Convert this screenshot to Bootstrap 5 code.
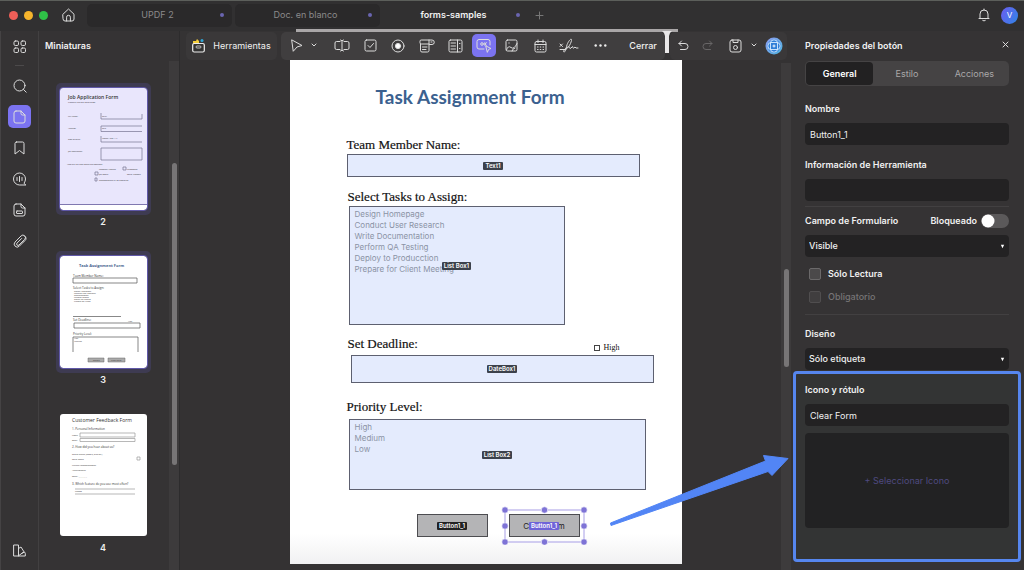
<!DOCTYPE html>
<html lang="es">
<head>
<meta charset="utf-8">
<meta name="viewport" content="width=device-width, initial-scale=1">
<title>UPDF - forms-samples</title>
<link href="https://cdn.jsdelivr.net/npm/bootstrap@5.3.0/dist/css/bootstrap.min.css" rel="stylesheet">
<style>
:root{--ui:#353334;--line:#424041;--field:#232223;--violet:#7b73f0;--blue:#5686ee}
body{font-family:Inter,"Liberation Sans",sans-serif;font-size:9px;line-height:14px;color:#f0f0f0;background:var(--ui)}
svg{display:block;flex:none}
svg.ic{fill:none;stroke:#dcdcdc;stroke-width:1;stroke-linecap:round;stroke-linejoin:round}
button{font-size:9px;line-height:14px;color:inherit;background:none;border:0;padding:0}
.app{min-height:100vh;border-top:1px solid #5c5f5b}
.topbar{height:30px;background:#313031;padding:0 6px 2px 9px}
.light{width:9px;height:9px;border-radius:50%}
.tabs-row{gap:3px;margin-left:12px}
.doc-tab{width:145px;height:23px;border-radius:5px;background:#2a292a;color:#8a898a;padding:0 8px}
.doc-tab.current{background:none;color:#f2f2f2;font-weight:600}
.doc-tab i{width:4px;height:4px;border-radius:50%;background:#6a65b0}
.avatar{width:17px;height:17px;border-radius:50%;background:linear-gradient(120deg,#6d5cf0,#2f86e6);font-size:8px;margin-left:11px}
.rail{width:39px;border-right:1px solid var(--line);border-left:1px solid #454344}
.rail button{width:23px;height:23px;border-radius:5px}
.rail button.on,.tools button.on{background:var(--violet)}
.rail hr{width:9px;margin:7px 0 8px;opacity:1;border-color:#4c4a4b}
.thumbs{width:141px;border-right:1px solid #2d2c2d}
.gutter{width:10px;background:#3d3b3c}
.knob{width:5px;border-radius:3px;background:#777576}
.pane-title{font-size:9px;font-weight:600;height:30px}
.thumb{padding:5px 4px;border-radius:5px}
.thumb.sel{background:#3e3b52}
.thumb svg{border-radius:3px;background:#fff}
.thumb.sel svg{outline:1px solid #6058a8}
.thumb text{font-family:"Open Sans",sans-serif;fill:#333}
.num{font-size:9px;font-weight:600}
.stage{background:#343233;min-width:0}
.bar{height:29px;background:var(--ui);padding:0 4px 0 6px}
.bar::before{content:"";position:absolute;left:50%;top:-2px;width:382px;margin-left:-190px;height:3px;background:#aaa7a8}
.group{height:28px;border-radius:5px;background:#403e3f}
.group.dark{background:#3a3839}
.tools button{width:24px;height:23px;border-radius:5px}
.tools .narrow{width:12px}
.sheet{width:392px;height:504px;background:linear-gradient(#fff 94%,#f1f1f2);color:#111;padding-left:57px}
.sheet h1{font:700 19px/24px Lato,"Open Sans",sans-serif;color:#3b618f;margin:25px 0 0 29px}
.caption{font:13px/18px "Liberation Serif",serif;color:#111;-webkit-text-stroke:.2px #111}
.box{position:relative;border:1px solid #5d6070;background:#e4ebfd}
.box input,.box select{width:100%;height:100%;border:0;background:none;display:block;outline:0;padding:2px 2px 1px;overflow:hidden;font:8px/11px Inter,sans-serif;color:#8b93a5}
.box option{font:8px/11px Inter,sans-serif;height:11px;min-height:0;padding:0 3px;color:#8b93a5}
.tag{position:absolute;inset:0;pointer-events:none}
.tag span{font-size:6px;line-height:8px;font-weight:600;color:#fff;background:#3c414b;border-radius:1px;padding:0 2px}
.pdf-btn{width:71px;height:23px;background:#b4b4b6;border:1px solid #4c4c50;color:#222;position:relative;font-size:8px}
.handles{position:absolute;left:-9px;top:-9px}
.tag .vio{background:#6f63d8}
.tick{appearance:none;width:6px;height:6px;border:1px solid #444}
.high{font:8px/10px "Liberation Serif",serif;margin-right:62px}
.pointer{position:absolute;right:0;top:423px;z-index:3}
.props{width:233px;padding:0 15px 0 14px}
.props label{font-size:9px;font-weight:600;line-height:14px}
.seg{height:25px;border-radius:5px;background:#454344;padding:1px}
.seg button{color:#aaa8a9;border-radius:4px}
.seg button.on{background:#222122;color:#fff;font-weight:600}
.field{height:22px;border:0;border-radius:4px;background-color:var(--field);color:#f0f0f0;font-size:9px;line-height:14px;padding:0 5px;margin-top:7px}
.field:focus{background-color:var(--field);color:#fff}
select.field{--bs-form-select-bg-img:url("data:image/svg+xml,%3csvg xmlns='http://www.w3.org/2000/svg' viewBox='0 0 6 6'%3e%3cpath fill='%23fff' d='M1 1h4L3 5z'/%3e%3c/svg%3e");background-position:right 4px center;background-size:5px 5px;padding-left:4px;font-weight:500}
.props hr{margin:0;opacity:1;border-color:#424041}
.props .form-check-input{width:12px;height:12px;margin:1px 0 0;border-color:#6b696a;background-color:#4b494a;border-radius:2px}
.props .form-check-input.lock{width:28px;height:14px;border:0;border-radius:7px;margin:0;background-position:left center;background-color:#5b595a;background-size:14px 14px;background-image:url("data:image/svg+xml,%3csvg xmlns='http://www.w3.org/2000/svg' viewBox='0 0 14 14'%3e%3ccircle cx='7' cy='7' r='6.5' fill='%23fff'/%3e%3c/svg%3e")}
.mark-area{border:3px solid var(--blue);border-radius:4px;margin:1px -12px 0;padding:9px 9px 31px;background:#333434}
.pick{height:95px;border-radius:4px;background:#222223;color:#4f4a80;margin-top:7px}
</style>
</head>
<body>
<div class="app d-flex flex-column">
<header class="topbar d-flex align-items-center">
  <div class="d-flex" style="gap:6px"><span class="light" style="background:#ee5f58"></span><span class="light" style="background:#f6b42c"></span><span class="light" style="background:#2fc147"></span></div>
  <button style="margin-left:14px" aria-label="Inicio"><svg class="ic" width="13" height="14" viewBox="0 0 13 14"><path d="M1 6.2 6.5 1 12 6.2V11a2 2 0 0 1-2 2H3a2 2 0 0 1-2-2zM4.6 13V9.2a1.9 1.9 0 0 1 3.8 0V13"/></svg></button>
  <nav class="tabs-row d-flex align-items-center">
    <button class="doc-tab d-flex align-items-center"><span class="flex-fill">UPDF 2</span><i></i></button>
    <button class="doc-tab d-flex align-items-center"><span class="flex-fill">Doc. en blanco</span><i></i></button>
    <button class="doc-tab current d-flex align-items-center"><span class="flex-fill">forms-samples</span><i></i></button>
    <button class="ms-1" aria-label="Nueva pestaña"><svg class="ic" width="9" height="9" viewBox="0 0 9 9" style="stroke:#777"><path d="M4.500 1v7M1 4.500h7"/></svg></button>
  </nav>
  <button class="ms-auto" aria-label="Avisos"><svg class="ic" width="12" height="14" viewBox="0 0 12 14"><path d="M1 10.500h10M2 10.500V6a4 4 0 0 1 8 0v4.500M6 2V1M4.700 12.500q1.300 1 2.600 0"/></svg></button>
  <button class="avatar text-white" aria-label="Cuenta">V</button>
</header>

<div class="d-flex flex-fill">
  <nav class="rail d-flex flex-column align-items-center flex-shrink-0">
    <button class="mt-1" aria-label="Panel"><svg class="ic m-auto" width="13" height="13" viewBox="0 0 13 13"><rect x="1" y="1" width="4.500" height="4.500" rx="1.300"/><rect x="8" y="1" width="4.500" height="4.500" rx="1.300"/><rect x="1" y="8" width="4.500" height="4.500" rx="1.300"/><rect x="8" y="8" width="4.500" height="4.500" rx="1.300"/></svg></button>
    <hr>
    <div class="d-flex flex-column gap-2">
      <button aria-label="Buscar"><svg class="ic m-auto" width="14" height="14" viewBox="0 0 14 14"><circle cx="6.500" cy="6.500" r="5.500"/><path d="m10.500 10.500 2.700 2.700"/></svg></button>
      <button class="on" aria-label="Miniaturas"><svg class="ic m-auto" width="13" height="14" viewBox="0 0 13 14"><path d="M3 1h5l4 4v6a2 2 0 0 1-2 2H3a2 2 0 0 1-2-2V3a2 2 0 0 1 2-2zM8 1v2.500A1.500 1.500 0 0 0 9.500 5H12"/></svg></button>
      <button aria-label="Marcadores"><svg class="ic m-auto" width="11" height="14" viewBox="0 0 11 14"><path d="M2.500 1h6A1.500 1.500 0 0 1 10 2.500V13L5.500 9.500 1 13V2.500A1.500 1.500 0 0 1 2.500 1z"/></svg></button>
      <button aria-label="Comentarios"><svg class="ic m-auto" width="15" height="14" viewBox="0 0 15 14"><path d="M13.500 13H7.500a6 6 0 1 1 6-6q0 2-1.300 4zM5 5.500v3M7.500 4.500v5M10 5.500v3"/></svg></button>
      <button aria-label="Campos"><svg class="ic m-auto" width="13" height="14" viewBox="0 0 13 14"><path d="M3 1h5l4 4v6a2 2 0 0 1-2 2H3a2 2 0 0 1-2-2V3a2 2 0 0 1 2-2zM8 1v2.500A1.500 1.500 0 0 0 9.500 5H12"/><rect x="3.500" y="8" width="6" height="2.500" rx=".5"/></svg></button>
      <button aria-label="Adjuntos"><svg class="ic m-auto" width="14" height="14" viewBox="0 0 14 14"><path d="M10.500 8 6.300 12.200a2.900 2.900 0 0 1-4.200-4.200l6-6.100a2.400 2.400 0 0 1 3.600 3.500L6 11a1.300 1.300 0 0 1-2-1.900l4.600-4.600M10.500 8l1.600-1.600a2.600 2.600 0 0 0-.3-4.300"/></svg></button>
    </div>
    <button class="mt-auto mb-2" aria-label="Estilos"><svg class="ic m-auto" width="13" height="13" viewBox="0 0 13 13"><path d="M1 1h4.500v11H1zM5.500 4.500 8 3l3 4.800-5.500 4M8.500 9.500l3-1.500.8 1.500V12H5.500"/></svg></button>
  </nav>

  <aside class="thumbs d-flex flex-column flex-shrink-0">
    <div class="pane-title d-flex align-items-center" style="padding-left:6px">Miniaturas</div>
    <div class="d-flex flex-fill">
      <div class="flex-fill d-flex flex-column align-items-center" style="padding:22px 2px 0 0">
        <div class="thumb sel"><svg width="87" height="122" viewBox="0 0 87 122"><path fill="#e9e6fc" d="M0 0h87v116H0z"/><path stroke="#8078b0" d="M0 116.500h87"/><text x="8" y="11" font-size="5" font-weight="600">Job Application Form</text><g font-size="2"><text x="8" y="15">Please fill out the form below.</text><text x="8" y="29">Full Name:</text><text x="8" y="41">Address:</text><text x="8" y="52">Date of Birth:</text><text x="8" y="64">Job description:</text><text x="7" y="77">How did you hear about this position?</text><text x="42" y="29">Text1</text><text x="42" y="41">Text</text><text x="42" y="51">Month / Day / Yr</text><text x="39" y="82">Company Website</text><text x="67" y="82">Newspaper</text><text x="39" y="87">Job Board</text><text x="67" y="87">Social Network</text><text x="39" y="93">Recommended by an employee</text></g><path fill="none" stroke="#777391" stroke-width=".7" d="M41 25v6h41v-5M82 38H41v5.500h41M41 48v6h41M41 60v12h41V60zM35 84h3v3h-3zM63 79h3v3h-3zM35 90h2v3h-2z"/></svg></div>
        <div class="num">2</div>
        <div class="thumb sel" style="margin-top:22px"><svg width="87" height="112" viewBox="0 0 87 112"><text x="19" y="11" font-size="4" font-weight="700" style="fill:#48658f">Task Assignment Form</text><g font-size="2"><text x="13" y="21" font-size="3">Team Member Name:</text><text x="13" y="33" font-size="3">Select Tasks to Assign:</text><text x="14" y="36">Design Homepage</text><text x="14" y="38">Conduct User Research</text><text x="14" y="40">Documentation</text><text x="14" y="42">Perform Testing</text><text x="14" y="44">Deploy to Product</text><text x="14" y="46">Prepare for Client</text><text x="13" y="65" font-size="3">Set Deadline:</text><text x="68" y="66">High</text><text x="13" y="79" font-size="3">Priority Level:</text><text x="14" y="83">High</text><text x="14" y="86">Medium</text></g><path fill="none" stroke="#555" stroke-width=".7" d="M13 22h64v5H13zM13 60.500h48M14 67h66v5H14zM78 96V81H13v15"/><path fill="#aaa" stroke="#666" stroke-width=".5" d="M28 102h16v4H28zM48 102h17v4H48z"/><g font-size="2"><text x="33" y="105">Submit</text><text x="51" y="105">Clear Form</text></g></svg></div>
        <div class="num">3</div>
        <div class="thumb" style="margin-top:22px"><svg width="87" height="122" viewBox="0 0 87 122"><text x="12" y="8" font-size="5">Customer Feedback Form</text><g font-size="3"><text x="12" y="16">1. Personal Information</text><text x="12" y="22" font-size="2">Name:</text><text x="12" y="27" font-size="2">Email:</text><text x="12" y="34">2. How did you hear about us?</text><g font-size="2"><text x="12" y="41">Search engine (Google, Bing etc.)</text><text x="12" y="46">Social media</text><text x="12" y="52">Friend's recommendation</text><text x="12" y="57">Advertisement</text><text x="12" y="63">Other: __________</text></g><text x="12" y="71">3. Which feature do you use most often?</text><text x="15" y="78" font-size="2">Choose</text></g><path fill="none" stroke="#999" stroke-width=".7" d="M20 19h55v4H20zM20 24.500h55v3H20zM15 75h60M15 80h60M77 43h3v3h-3z"/></svg></div>
        <div class="num">4</div>
      </div>
      <div class="gutter flex-shrink-0 ms-auto"><div class="knob mx-auto" style="height:302px;margin-top:102px"></div></div>
    </div>
  </aside>

  <main class="stage position-relative d-flex flex-column flex-fill">
    <div class="bar position-relative d-flex align-items-center gap-1">
      <button class="group dark d-flex align-items-center justify-content-center gap-2" style="width:91px"><svg width="13" height="15" viewBox="0 0 13 15"><path fill="#f5cf3c" d="M1 6V3h3l1-2 2 2v3z"/><circle cx="10" cy="2.500" r="1.500" fill="#2fa7d8"/><rect x=".7" y="5.500" width="11.600" height="8.500" rx="1.500" fill="#333" stroke="#eee" stroke-width="1.200"/><rect x="4" y="8" width="5" height="2" rx="1" fill="none" stroke="#ddd" stroke-width=".8"/></svg><span>Herramientas</span></button>
      <div class="group tools d-flex align-items-center flex-fill justify-content-between ps-1 pe-2">
        <button aria-label="Seleccionar"><svg class="ic m-auto" width="12" height="13" viewBox="0 0 12 13"><path d="m1 1 10 5.500L6 8l-3.500 4z"/></svg></button>
        <button class="narrow" style="margin:0 5px 0 -5px" aria-label="Más cursores"><svg class="ic m-auto" width="6" height="5" viewBox="0 0 6 5"><path d="m1 1 2 2 2-2"/></svg></button>
        <button aria-label="Campo de texto"><svg class="ic m-auto" width="16" height="13" viewBox="0 0 16 13"><path d="M6 2.500H2.500A1.500 1.500 0 0 0 1 4v5a1.500 1.500 0 0 0 1.500 1.500H6M10 2.500h3.500A1.500 1.500 0 0 1 15 4v5a1.500 1.500 0 0 1-1.500 1.500H10M8 1.500v10M6.500 1 8 1.800 9.500 1M6.500 12 8 11.200 9.500 12"/></svg></button>
        <button aria-label="Casilla"><svg class="ic m-auto" width="13" height="13" viewBox="0 0 13 13"><rect x="1" y="1" width="11" height="11" rx="1.500"/><path d="m4 6.500 2 2 3.500-4"/></svg></button>
        <button aria-label="Opción"><svg class="ic m-auto" width="14" height="14" viewBox="0 0 14 14"><circle cx="7" cy="7" r="6"/><circle cx="7" cy="7" r="2.600" fill="#fff"/></svg></button>
        <button aria-label="Desplegable"><svg class="ic m-auto" width="16" height="14" viewBox="0 0 16 14"><path d="M10 5H2.200A1.200 1.200 0 0 1 1 3.800V2.200A1.200 1.200 0 0 1 2.200 1H13a2 2 0 0 1 0 4.500h-2.500M10 1v10.500A1.500 1.500 0 0 1 8.500 13H3a1.500 1.500 0 0 1-1.500-1.500V5M3.500 8H8M3.500 10.500H7M12 3h1"/></svg></button>
        <button aria-label="Lista"><svg class="ic m-auto" width="15" height="14" viewBox="0 0 15 14"><rect x="1" y="1" width="13" height="12" rx="1.500"/><path d="M9.500 1v12M3 4h4.500M3 7h4.500M3 10h4.500M11.500 4.500h.5M11.500 9.500h.5"/></svg></button>
        <button class="on" aria-label="Botón"><svg class="ic m-auto" width="16" height="15" viewBox="0 0 16 15"><path d="M8 11H3a2 2 0 0 1-2-2V3.500a2 2 0 0 1 2-2h9a2 2 0 0 1 2 2V7M10 8l5 2.500-2.300.8L11.500 14z"/><circle cx="6" cy="6" r="1.300"/><path d="M8.800 4.700v2.600M10.500 4.700 9 6l1.500 1.300"/></svg></button>
        <button aria-label="Imagen"><svg class="ic m-auto" width="13" height="13" viewBox="0 0 13 13"><rect x="1" y="1" width="11" height="11" rx="1.500"/><path d="M1.500 11Q3 6 6 8.500T12 4.500M4 3.800v.4M7 12q0-2 3-3"/></svg></button>
        <button aria-label="Fecha"><svg class="ic m-auto" width="13" height="14" viewBox="0 0 13 14"><rect x="1" y="2.500" width="11" height="10.500" rx="1.500"/><path d="M1 5.500h11M4 1v2.500M9 1v2.500M3.500 8h.6M6.200 8h.6M9 8h.6M3.500 10.500h.6M6.200 10.500h.6M9 10.500h.6"/></svg></button>
        <button aria-label="Firma"><svg class="ic m-auto" width="20" height="15" viewBox="0 0 20 15"><path d="m1 6 2.500 2.500M3.500 6 1 8.500M1 11.500h5c3 0 7-8 6.500-10-.8-1.500-4 3-5 7-.8 4-1.500 5.500-2.500 5.500s0-3 3-4.500c1.500-1 2-1 2.500-.5s0 2 1 1.500l2-2c.5 0 0 2 1 1.700l1.500-1.200 1 1h2"/></svg></button>
        <button class="ms-1" aria-label="Más"><svg class="m-auto" width="13" height="3" viewBox="0 0 13 3" fill="#eee"><circle cx="1.700" cy="1.500" r="1.200"/><circle cx="6.500" cy="1.500" r="1.200"/><circle cx="11.300" cy="1.500" r="1.200"/></svg></button>
        <button class="w-auto fw-medium ms-2 ps-1">Cerrar</button>
      </div>
      <svg class="align-self-start position-relative" width="10" height="25" viewBox="0 0 10 25" style="margin:0 -6px 0 -7px"><path fill="#e9e7e8" d="M0 0h10Q7 2 7 5v17H3V5Q3 2 0 0z"/></svg>
      <div class="group dark d-flex align-items-center justify-content-between" style="width:117px;padding:0 4px 0 8px">
        <button aria-label="Deshacer"><svg class="ic" width="11" height="11" viewBox="0 0 11 11"><path d="M3.500 1 1 3.500 3.500 6M1 3.500h6a3 3 0 0 1 0 6H2.500"/></svg></button>
        <button class="ms-1" aria-label="Rehacer" disabled><svg class="ic" width="11" height="11" viewBox="0 0 11 11" style="stroke:#686667"><path d="M7.500 1 10 3.500 7.500 6M10 3.500H4a3 3 0 0 0 0 6h4.500"/></svg></button>
        <button class="ms-2" aria-label="Guardar"><svg class="ic" width="13" height="14" viewBox="0 0 13 14"><rect x="1" y="1" width="11" height="12" rx="2"/><path d="M4 1v2.500h5V1"/><circle cx="6.500" cy="8.500" r="2"/></svg></button>
        <button aria-label="Más opciones"><svg class="ic" width="6" height="5" viewBox="0 0 6 5"><path d="m1 1 2 2 2-2"/></svg></button>
        <button aria-label="Asistente"><svg width="18" height="18" viewBox="0 0 18 18"><defs><linearGradient id="ai" x2="1" y2="1"><stop stop-color="#8f9cf0"/><stop offset="1" stop-color="#4bb4e0"/></linearGradient></defs><circle cx="9" cy="9" r="8.500" fill="url(#ai)"/><circle cx="9" cy="9" r="6.500" fill="#2f7fd8"/><g fill="none" stroke="#d8ecff" stroke-width=".9"><rect x="5.500" y="3" width="7" height="12" rx="3"/><rect x="3" y="5.500" width="12" height="7" rx="3"/><path stroke="#fff" d="M9 7.500v3M7.500 9h3"/></g></svg></button>
      </div>
    </div>

    <article class="sheet mx-auto overflow-hidden">
      <h1>Task Assignment Form</h1>
      <label class="caption d-block" for="f1" style="margin-top:27px">Team Member Name:</label>
      <div class="box" style="width:293px;height:23px"><input id="f1" type="text"><div class="tag d-flex align-items-center justify-content-center"><span>Text1</span></div></div>
      <label class="caption d-block" for="f2" style="margin-top:11px;padding-left:1px">Select Tasks to Assign:</label>
      <div class="box" style="width:216px;height:119px;margin-left:2px"><select id="f2" multiple><option>Design Homepage</option><option>Conduct User Research</option><option>Write Documentation</option><option>Perform QA Testing</option><option>Deploy to Producction</option><option>Prepare for Client Meeting</option></select><div class="tag d-flex align-items-center justify-content-center"><span>List Box1</span></div></div>
      <div class="d-flex align-items-center" style="margin-top:10px;padding-left:1px"><label class="caption" for="f3">Set Deadline:</label><label class="high d-flex align-items-center ms-auto gap-1 mt-2"><input class="tick m-0" type="checkbox">High</label></div>
      <div class="box" style="width:303px;height:28px;margin:2px 0 0 4px"><input id="f3" type="text"><div class="tag d-flex align-items-center justify-content-center"><span>DateBox1</span></div></div>
      <label class="caption d-block" for="f4" style="margin-top:15px">Priority Level:</label>
      <div class="box" style="width:297px;height:71px;margin:3px 0 0 2px"><select id="f4" multiple><option>High</option><option>Medium</option><option>Low</option></select><div class="tag d-flex align-items-center justify-content-center"><span>List Box2</span></div></div>
      <div class="d-flex" style="gap:21px;margin:24px 0 0 70px">
        <button class="pdf-btn"><span class="tag d-flex align-items-center justify-content-center"><span style="background:#222">Button1_1</span></span></button>
        <button class="pdf-btn">Clear Form<span class="tag d-flex align-items-center justify-content-center"><span class="vio">Button1_1</span></span>
          <svg class="handles" width="87" height="39" viewBox="0 0 87 39"><rect x="4" y="4" width="79" height="32" fill="none" stroke="#a79ee6"/><g fill="#7e73d6" stroke="#fff" stroke-width=".6"><circle cx="4" cy="4" r="3.200"/><circle cx="43.500" cy="4" r="3.200"/><circle cx="83" cy="4" r="3.200"/><circle cx="4" cy="20" r="3.200"/><circle cx="83" cy="20" r="3.200"/><circle cx="4" cy="36" r="3.200"/><circle cx="43.500" cy="36" r="3.200"/><circle cx="83" cy="36" r="3.200"/></g></svg>
        </button>
      </div>
    </article>
    <div class="gutter position-absolute end-0 bottom-0" style="top:32px"><div class="knob mx-auto" style="height:98px;margin-top:206px"></div></div>
    <svg class="pointer" width="184" height="75" viewBox="607 454 184 75"><path fill="#5285f5" stroke="#5285f5" stroke-linejoin="round" d="m610.500 523 155-62-2-5.500 24.500 3-16 17-4-4L611 525.500z"/></svg>
  </main>

  <aside class="props flex-shrink-0">
    <div class="pane-title d-flex align-items-center justify-content-between">Propiedades del botón<button class="mb-1" aria-label="Cerrar panel"><svg class="ic" width="7" height="7" viewBox="0 0 7 7"><path d="m1 1 5 5M6 1 1 6"/></svg></button></div>
    <div class="seg d-flex"><button class="on flex-fill w-100">General</button><button class="flex-fill w-100">Estilo</button><button class="flex-fill w-100">Acciones</button></div>
    <label class="d-block" for="p1" style="margin-top:16px">Nombre</label>
    <input id="p1" class="form-control field" value="Button1_1">
    <label class="d-block" for="p2" style="margin-top:13px">Información de Herramienta</label>
    <input id="p2" class="form-control field">
    <hr style="margin-top:5px">
    <div class="d-flex align-items-center" style="margin-top:7px"><label for="p3">Campo de Formulario</label><label class="ms-auto me-1" for="p4">Bloqueado</label><input id="p4" class="form-check-input lock" type="checkbox" role="switch"></div>
    <select id="p3" class="form-select field"><option>Visible</option></select>
    <div class="d-flex" style="gap:7px;margin:10px 0 0 4px"><input id="p5" class="form-check-input" type="checkbox"><label for="p5">Sólo Lectura</label></div>
    <div class="d-flex" style="gap:7px;margin:9px 0 0 4px;color:#777576"><input id="p6" class="form-check-input" type="checkbox" disabled><label for="p6" class="fw-medium">Obligatorio</label></div>
    <hr style="margin-top:10px">
    <label class="d-block" for="p7" style="margin-top:12px">Diseño</label>
    <select id="p7" class="form-select field"><option>Sólo etiqueta</option></select>
    <section class="mark-area">
      <label class="d-block" for="p8">Icono y rótulo</label>
      <input id="p8" class="form-control field" value="Clear Form">
      <button class="pick w-100">+ Seleccionar Icono</button>
    </section>
  </aside>
</div>
</div>
<script src="https://cdn.jsdelivr.net/npm/bootstrap@5.3.0/dist/js/bootstrap.bundle.min.js"></script>
</body>
</html>
